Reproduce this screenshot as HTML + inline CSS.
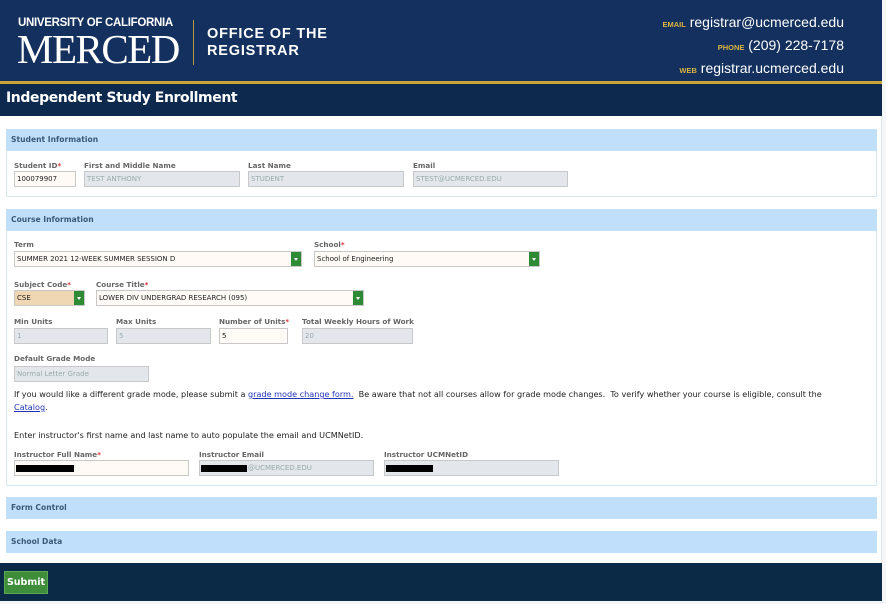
<!DOCTYPE html>
<html><head><meta charset="utf-8"><style>
*{margin:0;padding:0;box-sizing:border-box}
body{width:886px;height:604px;background:#f4f6f8;position:relative;overflow:hidden;font-family:"DejaVu Sans",sans-serif}
.a{position:absolute}
.hdr{left:0;top:0;width:882px;height:83px;background:#13305e}
.gold{left:0;top:81px;width:882px;height:3px;background:#c9a53a}
.bar{left:0;top:84px;width:882px;height:32px;background:#0d2a4e}
.main{left:0;top:116px;width:882px;height:447px;background:#fff;border-right:1px solid #dde6ee}
.sh{background:#bfdffb;color:#3a5a7a;font-size:7.6px;font-weight:bold;padding-left:5px;line-height:22px;left:6px;width:871px;height:22px}
.box{border:1px solid #d6e6f3;left:6px;width:871px}
.lb{font-size:7.2px;font-weight:bold;color:#666}
.lb i{color:#d33;font-style:normal}
.in{height:16px;border:1px solid #c8c8c8;background:#e3e7ec;font-size:7px;color:#9aa;line-height:14px;padding-left:2px;white-space:nowrap}
.w{background:#fffaf5;color:#222}
.arr{position:absolute;right:0;top:0;width:10px;height:100%;background:#2f8a36}
.arr:after{content:"";position:absolute;left:3px;top:6px;border:2px solid transparent;border-top:3px solid #fff}
.blk{position:absolute;background:#000;height:7px;top:4px}
.t{font-size:8.1px;color:#222}
.ft{left:0;top:563px;width:882px;height:38px;background:#0a2a45}
</style></head><body>
<div class="a hdr"></div>
<div class="a gold"></div>
<div class="a bar"></div>
<div class="a" style="left:18px;top:17px;color:#fff;font-family:'Liberation Sans',sans-serif;font-size:11.5px;font-weight:bold;letter-spacing:-0.3px">UNIVERSITY OF CALIFORNIA</div>
<div class="a" style="left:17px;top:28px;color:#fff;font-family:'Liberation Serif',serif;font-size:41px;letter-spacing:-1.5px;line-height:42px">MERCED</div>
<div class="a" style="left:193px;top:20px;width:1px;height:45px;background:#b8973a"></div>
<div class="a" style="left:207px;top:26px;color:#fff;font-family:'Liberation Sans',sans-serif;font-size:14.5px;font-weight:bold;letter-spacing:0.8px;line-height:17px">OFFICE OF THE<br>REGISTRAR</div>
<div class="a" style="right:42px;top:12px;color:#fff;font-family:'Liberation Sans',sans-serif;font-size:14px;text-align:right;line-height:21px"><span style="color:#d9b441;font-size:7.5px;font-weight:bold">EMAIL</span> registrar@ucmerced.edu<br><span style="color:#d9b441;font-size:7.5px;font-weight:bold">PHONE</span> (209) 228-7178<br><span style="color:#d9b441;font-size:7.5px;font-weight:bold">WEB</span> registrar.ucmerced.edu</div>
<div class="a" style="left:6px;top:90px;color:#fff;font-size:14px;font-weight:bold;letter-spacing:-0.4px">Independent Study Enrollment</div>
<div class="a main"></div>

<div class="a box" style="top:129px;height:68px"></div>
<div class="a sh" style="top:129px">Student Information</div>
<div class="a lb" style="left:14px;top:161px">Student ID<i>*</i></div>
<div class="a lb" style="left:84px;top:161px">First and Middle Name</div>
<div class="a lb" style="left:248px;top:161px">Last Name</div>
<div class="a lb" style="left:413px;top:161px">Email</div>
<div class="a in w" style="left:14px;top:171px;width:62px">100079907</div>
<div class="a in" style="left:84px;top:171px;width:156px">TEST ANTHONY</div>
<div class="a in" style="left:248px;top:171px;width:156px">STUDENT</div>
<div class="a in" style="left:413px;top:171px;width:155px">STEST@UCMERCED.EDU</div>

<div class="a box" style="top:209px;height:277px"></div>
<div class="a sh" style="top:209px">Course Information</div>
<div class="a lb" style="left:14px;top:240px">Term</div>
<div class="a lb" style="left:314px;top:240px">School<i>*</i></div>
<div class="a in w" style="left:14px;top:251px;width:288px">SUMMER 2021 12-WEEK SUMMER SESSION D<span class="arr"></span></div>
<div class="a in w" style="left:314px;top:251px;width:226px">School of Engineering<span class="arr"></span></div>
<div class="a lb" style="left:14px;top:280px">Subject Code<i>*</i></div>
<div class="a lb" style="left:96px;top:280px">Course Title<i>*</i></div>
<div class="a in w" style="left:14px;top:290px;width:71px;background:#f0d7b4">CSE<span class="arr"></span></div>
<div class="a in w" style="left:96px;top:290px;width:268px">LOWER DIV UNDERGRAD RESEARCH (095)<span class="arr"></span></div>
<div class="a lb" style="left:14px;top:317px">Min Units</div>
<div class="a lb" style="left:116px;top:317px">Max Units</div>
<div class="a lb" style="left:219px;top:317px">Number of Units<i>*</i></div>
<div class="a lb" style="left:302px;top:317px">Total Weekly Hours of Work</div>
<div class="a in" style="left:14px;top:328px;width:94px">1</div>
<div class="a in" style="left:116px;top:328px;width:95px">5</div>
<div class="a in w" style="left:219px;top:328px;width:69px">5</div>
<div class="a in" style="left:302px;top:328px;width:111px">20</div>
<div class="a lb" style="left:14px;top:354px">Default Grade Mode</div>
<div class="a in" style="left:14px;top:366px;width:135px">Normal Letter Grade</div>
<div class="a t" style="left:14px;top:388px;line-height:13px;white-space:nowrap">If you would like a different grade mode, please submit a <u style="color:#2233bb">grade mode change form.</u>&nbsp; Be aware that not all courses allow for grade mode changes.&nbsp; To verify whether your course is eligible, consult the<br><u style="color:#2233bb">Catalog</u>.</div>
<div class="a t" style="left:14px;top:430px">Enter instructor's first name and last name to auto populate the email and UCMNetID.</div>
<div class="a lb" style="left:14px;top:450px">Instructor Full Name<i>*</i></div>
<div class="a lb" style="left:199px;top:450px">Instructor Email</div>
<div class="a lb" style="left:384px;top:450px">Instructor UCMNetID</div>
<div class="a in w" style="left:14px;top:460px;width:175px"><span class="blk" style="left:1px;width:58px"></span></div>
<div class="a in" style="left:199px;top:460px;width:175px;padding-left:48px">@UCMERCED.EDU<span class="blk" style="left:1px;width:46px"></span></div>
<div class="a in" style="left:384px;top:460px;width:175px"><span class="blk" style="left:1px;width:47px"></span></div>

<div class="a sh" style="top:497px">Form Control</div>
<div class="a sh" style="top:531px">School Data</div>
<div class="a ft"></div>
<div class="a" style="left:4px;top:571px;width:44px;height:23px;background:#3d8d3a;border:1px solid #5aa756;color:#fff;font-size:9.5px;font-weight:bold;line-height:21px;text-align:center">Submit</div>
</body></html>
